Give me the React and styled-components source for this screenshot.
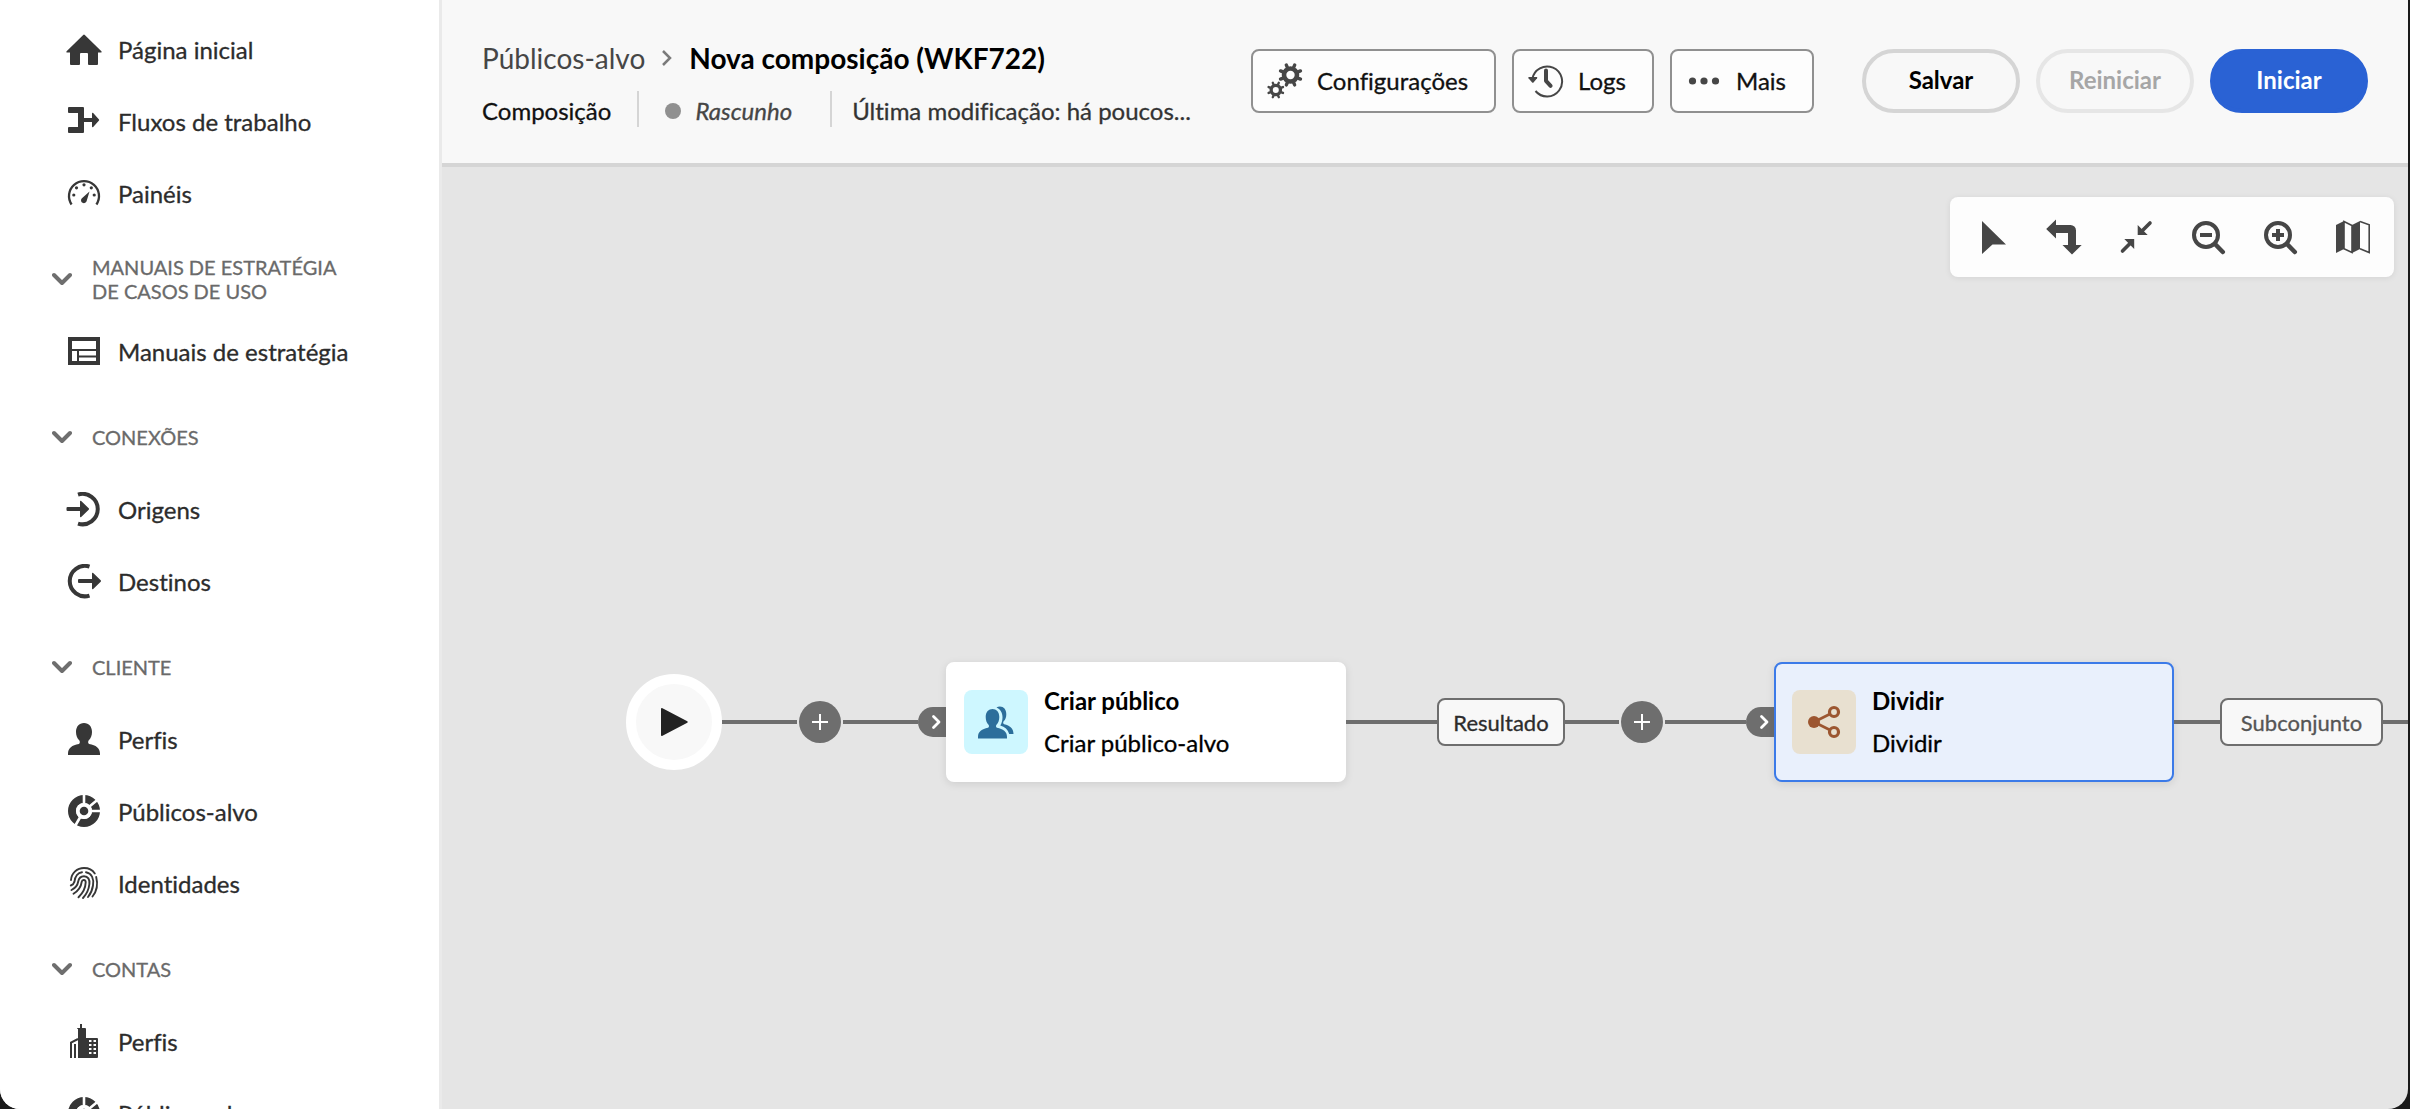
import React from "react";
import styled, { createGlobalStyle } from "styled-components";

const GlobalStyle = createGlobalStyle`
  * { box-sizing: border-box; }
  body {
    margin: 0;
    background: #1a1a1a;
    font-family: "Lato", "Noto Sans", sans-serif;
    font-size: 24px;
    line-height: 32px;
    font-variant-ligatures: none;
    color: #222;
  }
  button { font: inherit; font-variant-ligatures: inherit; color: inherit; cursor: pointer; }
  a { color: inherit; text-decoration: none; }
  svg { display: block; flex: none; }
`;

/* ---------- Shell ---------- */

const Window = styled.div`
  display: flex;
  height: 100vh;
  margin-right: 2px;
  overflow: hidden;
  border-radius: 0 0 20px 20px;
  background: #e5e5e5;
`;

const Sidebar = styled.nav`
  flex: none;
  width: 442px;
  padding-top: 14px;
  overflow: hidden;
  background: #fff;
  border-right: 3px solid #eaeaea;
`;

const Main = styled.main`
  flex: 1;
  min-width: 0;
  display: flex;
  flex-direction: column;
`;

/* ---------- Sidebar ---------- */

const NavList = styled.ul`
  margin: 0;
  padding: 0;
  list-style: none;
`;

const NavLink = styled.a`
  display: flex;
  align-items: center;
  gap: 16px;
  height: 72px;
  padding-left: 66px;
  color: #2c2c2c;
  -webkit-text-stroke: 0.3px currentColor;

  svg { color: #373737; }
`;

const SectionToggle = styled.button`
  display: flex;
  align-items: center;
  gap: 20px;
  width: 100%;
  height: 72px;
  margin-top: 14px;
  padding: 0 88px 3px 52px;
  border: 0;
  background: none;
  text-align: left;
  text-transform: uppercase;
  font-size: 20px;
  line-height: 24px;
  color: #6a6a6a;
  -webkit-text-stroke: 0.3px currentColor;
`;

/* ---------- Header ---------- */

const Header = styled.header`
  display: flex;
  justify-content: space-between;
  gap: 40px;
  height: 167px;
  padding: 0 40px;
  background: #f8f8f8;
  border-bottom: 4px solid #d5d5d5;
`;

const TitleBlock = styled.div`
  padding-top: 38px;
`;

const Breadcrumb = styled.div`
  display: flex;
  align-items: center;
  gap: 16px;
  height: 40px;
  font-size: 28px;
  color: #464646;
`;

const PageTitle = styled.h1`
  margin: 0;
  font-size: 28px;
  font-weight: 700;
  color: #000;
`;

const Meta = styled.div`
  display: flex;
  align-items: center;
  height: 36px;
  margin-top: 13px;
  white-space: nowrap;
`;

const MetaItem = styled.span`
  display: flex;
  align-items: center;
  gap: 14px;
  padding-top: 4px;
  color: ${(p) => p.$color || "#111"};
  font-style: ${(p) => (p.$italic ? "italic" : "normal")};
  -webkit-text-stroke: 0.3px currentColor;
`;

const MetaDivider = styled.span`
  width: 2px;
  height: 36px;
  margin: 0 ${(p) => p.$after}px 0 ${(p) => p.$before}px;
  background: #d5d5d5;
`;

const StatusDot = styled.span`
  width: 16px;
  height: 16px;
  border-radius: 50%;
  background: #909090;
`;

const Actions = styled.div`
  display: flex;
  gap: 16px;
  padding-top: 49px;
`;

const ToolButton = styled.button`
  display: flex;
  align-items: center;
  gap: 14px;
  height: 64px;
  padding: 0 26px 0 14px;
  border: 2px solid #909090;
  border-radius: 8px;
  background: #fdfdfd;
  color: #111;
  -webkit-text-stroke: 0.3px currentColor;

  svg { color: #464646; }
`;

const PillGroup = styled.div`
  display: flex;
  gap: 16px;
  margin-left: 32px;
`;

const Pill = styled.button`
  height: 64px;
  min-width: 158px;
  padding: 0 28px 2px;
  border: 4px solid ${(p) => (p.$tone === "primary" ? "#2a62d4" : p.disabled ? "#e6e6e6" : "#d5d5d5")};
  border-radius: 32px;
  background: ${(p) => (p.$tone === "primary" ? "#2a62d4" : "transparent")};
  color: ${(p) => (p.$tone === "primary" ? "#fff" : p.disabled ? "#a6a6a6" : "#000")};
  font-weight: 700;
`;

/* ---------- Canvas ---------- */

const Canvas = styled.section`
  flex: 1;
  display: flex;
  flex-direction: column;
  overflow: hidden;
`;

const CanvasTools = styled.div`
  display: flex;
  align-self: flex-end;
  align-items: center;
  height: 80px;
  margin: 30px 14px 0;
  padding: 0 6px;
  border-radius: 8px;
  background: #fdfdfd;
  box-shadow: 0 1px 6px rgba(0, 0, 0, 0.08);
`;

const CanvasTool = styled.button`
  display: grid;
  place-items: center;
  width: 72px;
  height: 72px;
  padding: 0;
  border: 0;
  background: none;
  color: #464646;
`;

const Flow = styled.div`
  display: flex;
  align-items: center;
  height: 120px;
  margin-top: 385px;
  padding-left: 184px;
`;

const Link = styled.span`
  flex: ${(p) => (p.$length ? "none" : "1 0 24px")};
  width: ${(p) => (p.$length ? p.$length + "px" : "auto")};
  height: 4px;
  background: #6e6e6e;
`;

const StartNode = styled.button`
  flex: none;
  display: grid;
  place-items: center;
  width: 96px;
  height: 96px;
  padding: 0;
  border: 10px solid #fff;
  border-radius: 50%;
  background: #f8f8f8;
`;

const AddButton = styled.button`
  flex: none;
  display: grid;
  place-items: center;
  width: 42px;
  height: 42px;
  margin: 0 2px;
  padding: 0;
  border: 0;
  border-radius: 50%;
  background: #6e6e6e;
`;

const Port = styled.span`
  flex: none;
  display: flex;
  align-items: center;
  justify-content: flex-end;
  width: 28px;
  height: 30px;
  padding-right: 5px;
  border-radius: 15px 0 0 15px;
  background: #6e6e6e;
`;

const Card = styled.article`
  flex: none;
  display: flex;
  align-items: center;
  gap: 16px;
  width: 400px;
  height: 120px;
  padding: 0 16px;
  border: 2px solid ${(p) => (p.$selected ? "#3b7ae8" : "#fff")};
  border-radius: 8px;
  background: ${(p) => (p.$selected ? "#e9f0fc" : "#fff")};
  box-shadow: 0 2px 8px rgba(0, 0, 0, 0.1);
  color: #000;
`;

const CardIcon = styled.span`
  display: grid;
  place-items: center;
  width: 64px;
  height: 64px;
  border-radius: 8px;
  background: ${(p) => p.$bg};
`;

const CardText = styled.div`
  display: grid;
  gap: 10px;
`;

const CardTitle = styled.h2`
  margin: 0;
  font-size: 24px;
  font-weight: 700;
`;

const CardSubtitle = styled.p`
  margin: 0;
  -webkit-text-stroke: 0.3px currentColor;
`;

const Outcome = styled.span`
  flex: none;
  display: grid;
  place-items: center;
  width: ${(p) => p.$width}px;
  height: 48px;
  padding-top: 2px;
  border: 2px solid #6e6e6e;
  border-radius: 8px;
  background: #f8f8f8;
  color: ${(p) => p.$color};
  font-size: 22px;
  -webkit-text-stroke: 0.3px currentColor;
`;

/* ---------- Icons ---------- */

const Icon = ({ size = 36, children }) => (
  <svg width={size} height={size} viewBox="0 0 36 36" fill="currentColor" aria-hidden="true">
    {children}
  </svg>
);

const line = { fill: "none", stroke: "currentColor" };

const HomeIcon = () => (
  <Icon>
    <path d="M17.2 2.9a1.2 1.2 0 0 1 1.6 0L35.4 19.2c.5.6.2 1.4-.6 1.4H32V32a1 1 0 0 1-1 1h-8a1 1 0 0 1-1-1V22a1 1 0 0 0-1-1h-6a1 1 0 0 0-1 1v10a1 1 0 0 1-1 1H5a1 1 0 0 1-1-1V20.600H1.200c-.8 0-1.100-.8-.6-1.400z" />
  </Icon>
);

const WorkflowIcon = () => (
  <Icon>
    <path d="M3 3h14a1 1 0 0 1 1 1v10h8v-4.600c0-.7.700-1 1.200-.5l5.600 6.300a1 1 0 0 1 0 1.500l-5.600 6.300c-.5.5-1.200.2-1.200-.5V18h-8v10a1 1 0 0 1-1 1H3a1 1 0 0 1-1-1v-4a1 1 0 0 1 1-1h9V9H3a1 1 0 0 1-1-1V4a1 1 0 0 1 1-1z" />
  </Icon>
);

const GaugeIcon = () => (
  <Icon>
    <path d="M5.600 28.500A15 15 0 1 1 30.400 28.500" {...line} strokeWidth="2.300" />
    <circle cx="7.800" cy="19" r="1.600" />
    <circle cx="10.500" cy="11.800" r="1.600" />
    <circle cx="18" cy="8.800" r="1.600" />
    <circle cx="25.300" cy="11.800" r="1.600" />
    <circle cx="28.200" cy="19" r="1.600" />
    <path d="M23.500 15.500 20.800 24.500a2.900 2.900 0 1 1-4.600-2.600z" />
  </Icon>
);

const PlaybookIcon = () => (
  <Icon>
    <rect x="4" y="5" width="28" height="24" {...line} strokeWidth="4" />
    <path d="M5 16h26M12 16v13M12 22.500h19" {...line} strokeWidth="2" />
  </Icon>
);

const SourcesIcon = () => (
  <Icon>
    <path d="M12 2.600A15.200 15.200 0 1 1 12 31.600" {...line} strokeWidth="4" />
    <path d="M1.500 15H14V9.600c0-.7.700-1 1.200-.5l7.500 7.200a1 1 0 0 1 0 1.400l-7.500 7.200c-.5.5-1.200.2-1.200-.5V19H1.500a1 1 0 0 1-1-1v-2a1 1 0 0 1 1-1z" />
  </Icon>
);

const DestinationsIcon = () => (
  <Icon>
    <path d="M23.500 2.600A15.200 15.200 0 1 0 23.500 31.600" {...line} strokeWidth="4" />
    <path d="M13 15h13V9.600c0-.7.700-1 1.200-.5l7.500 7.200a1 1 0 0 1 0 1.400l-7.500 7.200c-.5.5-1.200.2-1.200-.5V19H13a1 1 0 0 1-1-1v-2a1 1 0 0 1 1-1z" />
  </Icon>
);

const PersonIcon = () => (
  <Icon>
    <path d="M18 1c5 0 8 3.800 8 9 0 3.500-1.300 6.500-3.200 8.300-.8.800-1 3.200.3 3.600C30 23 34 26 34 31.500V33H2v-1.500C2 26 6 23 12.900 21.900c1.300-.4 1.100-2.800.3-3.600C11.300 16.500 10 13.500 10 10c0-5.200 3-9 8-9z" />
  </Icon>
);

const AudienceIcon = () => (
  <Icon>
    <circle cx="18" cy="17" r="12" {...line} strokeWidth="8" />
    <path d="M18 9V0M18 17 32.500 5M24 17h12M16 20 8.500 33" fill="none" stroke="#fff" strokeWidth="2.600" />
    <circle cx="18" cy="17" r="8" fill="#fff" />
    <circle cx="18" cy="17" r="4.300" />
  </Icon>
);

const FingerprintIcon = () => (
  <Icon>
    <g {...line} strokeWidth="1.900" strokeLinecap="round">
      <path d="M5 14C5.500 7 11 2 18 2c4.500 0 8.500 2 10.800 5.500" />
      <path d="M30.200 11c1.800 7 .8 14-3.700 19.500" />
      <path d="M8.500 15.500C9 10.500 12 6.800 16 6.200M20 6.200c6 1.200 8 6.800 7 13.300-.6 4.200-2.200 8-5 11.500" />
      <path d="M4.800 19.500c1.700-.6 3-1.600 3.500-3.500" />
      <path d="M5.500 24c3.500-1.700 6-4.200 6.700-8.500.6-3.400 2.600-5.300 5.800-5.300 4 0 5.900 3.200 5.400 7.800-.6 5.700-2.700 10-6.400 14" />
      <path d="M7.500 27.800c5-3.300 7.600-7 8.200-12 .4-2.500 4-2.500 4 .5-.2 6-3 11-7.200 15" />
    </g>
  </Icon>
);

const BuildingIcon = () => (
  <Icon>
    <path d="M14 0h2v4h3a1 1 0 0 1 1 1v9h11a1 1 0 0 1 1 1v18a1 1 0 0 1-1 1H12V5h-1a1 1 0 0 1 1-1h2z" />
    <path d="M5 34V18.500L12 15M9 34V20" {...line} strokeWidth="2" />
    <path d="M23 17h2.500M27.500 17H30M23 21h2.500M27.500 21H30M23 25h2.500M27.500 25H30M23 29h2.500M27.500 29H30" stroke="#fff" strokeWidth="2" />
  </Icon>
);

const ChevronDown = () => (
  <svg width="20" height="20" viewBox="0 0 20 20" aria-hidden="true">
    <path d="M2 6l8 8 8-8" fill="none" stroke="#6e6e6e" strokeWidth="4" strokeLinecap="round" strokeLinejoin="round" />
  </svg>
);

const ChevronRight = () => (
  <svg width="12" height="20" viewBox="0 0 12 20" aria-hidden="true">
    <path d="M2 3l7 7-7 7" fill="none" stroke="#7a7a7a" strokeWidth="2.500" />
  </svg>
);

const PortChevron = () => (
  <svg width="10" height="16" viewBox="0 0 10 16" aria-hidden="true">
    <path d="M2.500 2.500L8 8l-5.500 5.500" fill="none" stroke="#fff" strokeWidth="2.800" strokeLinecap="round" strokeLinejoin="round" />
  </svg>
);

const PlusGlyph = () => (
  <svg width="16" height="16" viewBox="0 0 16 16" aria-hidden="true">
    <path d="M8 0v16M0 8h16" stroke="#fff" strokeWidth="2" />
  </svg>
);

const PlayGlyph = () => (
  <svg width="30" height="30" viewBox="0 0 30 30" aria-hidden="true">
    <path d="M2 2v26a1 1 0 0 0 1.500.8L28.300 15.800a1 1 0 0 0 0-1.600L3.500 1.200A1 1 0 0 0 2 2z" fill="#222" />
  </svg>
);

const teeth = [22.5, 67.5, 112.5, 157.5, 202.5, 247.5, 292.5, 337.5];

const Gear = ({ cx, cy, r }) => (
  <g transform={`translate(${cx} ${cy})`}>
    <circle r={r * 0.54} {...line} strokeWidth={r * 0.38} />
    {teeth.map((angle) => (
      <path
        key={angle}
        d={`M0 ${-r * 0.62}V${-r * 0.9}`}
        transform={`rotate(${angle})`}
        {...line}
        strokeWidth={r * 0.28}
        strokeLinecap="round"
      />
    ))}
  </g>
);

const GearsIcon = () => (
  <Icon>
    <Gear cx={23.500} cy={12} r={12} />
    <Gear cx={8.800} cy={27} r={8.600} />
  </Icon>
);

const HistoryIcon = () => (
  <Icon>
    <path d="M4.300 16A15 15 0 1 1 7.500 28" {...line} strokeWidth="2" />
    <path d="M1 14h7.600c.6 0 .9.700.5 1.200l-3.600 4.300a1 1 0 0 1-1.400 0L.5 15.200C.1 14.700.4 14 1 14z" />
    <path d="M18 7.500v10.300l4.600 5" {...line} strokeWidth="4" strokeLinecap="round" strokeLinejoin="round" />
  </Icon>
);

const MoreIcon = () => (
  <Icon>
    <circle cx="6.500" cy="18" r="3.600" />
    <circle cx="18" cy="18" r="3.600" />
    <circle cx="29.500" cy="18" r="3.600" />
  </Icon>
);

const SelectIcon = () => (
  <Icon>
    <path d="M8 2v33L18.500 25.500H32z" />
  </Icon>
);

const TurnIcon = () => (
  <Icon>
    <path d="M10 .5V6h14.500a5.500 5.500 0 0 1 5.500 5.500V26h5.700L26 35.500 16.500 26H22V14H10v5.500L.2 10z" />
  </Icon>
);

const CollapseIcon = () => (
  <Icon>
    <path d="M19.700 6v10h10zM6.300 20h9.900v10z" />
    <path d="M32 4l-9 9M4.500 32l9-9" {...line} strokeWidth="3.600" strokeLinecap="round" />
  </Icon>
);

const ZoomOutIcon = () => (
  <Icon>
    <circle cx="16" cy="16" r="12" {...line} strokeWidth="4" />
    <path d="M25 25l7.800 8" {...line} strokeWidth="4.500" strokeLinecap="round" />
    <path d="M10 14h12v4H10z" />
  </Icon>
);

const ZoomInIcon = () => (
  <Icon>
    <circle cx="16" cy="16" r="12" {...line} strokeWidth="4" />
    <path d="M25 25l7.800 8" {...line} strokeWidth="4.500" strokeLinecap="round" />
    <path d="M10 14h4v-4h4v4h4v4h-4v4h-4v-4h-4z" />
  </Icon>
);

const MapIcon = () => (
  <Icon>
    <path d="M2 6l8-4v28l-8 4zM18 6l8-4v28l-8 4z" />
    <path d="M10 2.500L18 6.500V33.500L10 29.800zM26 2.500l9.200 3.200V33.500L26 29.800" {...line} strokeWidth="1.600" />
  </Icon>
);

const PeopleIcon = () => (
  <Icon>
    <g fill="#2c6e9b">
      <path d="M14.500 5c3.800 0 6.800 2.800 6.800 8 0 3.200-1 6-2.800 7.800-.8 1-.6 2.600.5 3 6 1.100 10 3.700 10 9.200v1.500H0V33c0-5.500 4-8.100 10-9.200 1.100-.4 1.300-2 .5-3C8.700 19 7.700 16.200 7.700 13c0-5.200 3-8 6.800-8z" />
      <path d="M18.500 3.500c1-.7 2.100-1 3.400-1 3.800 0 6.400 3 6.400 7.700 0 3-.9 5.400-2.600 7.100-.9 1-.6 2.500.5 2.900 5.700 1.300 9.300 4.200 9.300 9.800h-4.300c-1.200-4.400-4.400-7-8.900-8.400 1.400-2.300 2.200-5.100 2.200-8.300 0-4.600-2.300-8.400-6-9.800z" />
    </g>
  </Icon>
);

const SplitIcon = () => (
  <Icon>
    <g fill="none" stroke="#9c5630">
      <path d="M8 18l20-10M8 18l20 10" strokeWidth="2.600" />
      <circle cx="28" cy="8" r="4.500" strokeWidth="3.200" fill="#e8e0d0" />
      <circle cx="28" cy="28" r="4.500" strokeWidth="3.200" fill="#e8e0d0" />
    </g>
    <circle cx="8" cy="18" r="6" fill="#9c5630" />
  </Icon>
);

/* ---------- Data ---------- */

const navigation = [
  {
    items: [
      ["Página inicial", HomeIcon],
      ["Fluxos de trabalho", WorkflowIcon],
      ["Painéis", GaugeIcon],
    ],
  },
  { title: "Manuais de estratégia de casos de uso", items: [["Manuais de estratégia", PlaybookIcon]] },
  { title: "Conexões", items: [["Origens", SourcesIcon], ["Destinos", DestinationsIcon]] },
  {
    title: "Cliente",
    items: [
      ["Perfis", PersonIcon],
      ["Públicos-alvo", AudienceIcon],
      ["Identidades", FingerprintIcon],
    ],
  },
  { title: "Contas", items: [["Perfis", BuildingIcon], ["Públicos-alvo", AudienceIcon]] },
];

const canvasTools = [
  ["Selecionar", SelectIcon],
  ["Girar layout", TurnIcon],
  ["Ajustar à tela", CollapseIcon],
  ["Diminuir zoom", ZoomOutIcon],
  ["Aumentar zoom", ZoomInIcon],
  ["Mapa", MapIcon],
];

/* ---------- Parts ---------- */

const NavSection = ({ title, items }) => (
  <>
    {title && (
      <SectionToggle type="button" aria-expanded="true">
        <ChevronDown />
        <span>{title}</span>
      </SectionToggle>
    )}
    <NavList>
      {items.map(([label, Glyph]) => (
        <li key={label}>
          <NavLink href="#">
            <Glyph />
            <span>{label}</span>
          </NavLink>
        </li>
      ))}
    </NavList>
  </>
);

const ActivityCard = ({ title, subtitle, iconBg, selected, children }) => (
  <Card $selected={selected}>
    <CardIcon $bg={iconBg}>{children}</CardIcon>
    <CardText>
      <CardTitle>{title}</CardTitle>
      <CardSubtitle>{subtitle}</CardSubtitle>
    </CardText>
  </Card>
);

const AddStep = () => (
  <AddButton type="button" aria-label="Adicionar atividade">
    <PlusGlyph />
  </AddButton>
);

export default function App() {
  return (
    <>
      <GlobalStyle />
      <Window>
        <Sidebar>
          {navigation.map((section, index) => (
            <NavSection key={index} {...section} />
          ))}
        </Sidebar>
        <Main>
          <Header>
            <TitleBlock>
              <Breadcrumb>
                <a href="#">Públicos-alvo</a>
                <ChevronRight />
                <PageTitle>Nova composição (WKF722)</PageTitle>
              </Breadcrumb>
              <Meta>
                <MetaItem>Composição</MetaItem>
                <MetaDivider $before={26} $after={26} />
                <MetaItem $italic $color="#464646">
                  <StatusDot />
                  Rascunho
                </MetaItem>
                <MetaDivider $before={38} $after={20} />
                <MetaItem $color="#333">Última modificação: há poucos...</MetaItem>
              </Meta>
            </TitleBlock>
            <Actions>
              <ToolButton type="button">
                <GearsIcon />
                Configurações
              </ToolButton>
              <ToolButton type="button">
                <HistoryIcon />
                Logs
              </ToolButton>
              <ToolButton type="button">
                <MoreIcon />
                Mais
              </ToolButton>
              <PillGroup>
                <Pill type="button">Salvar</Pill>
                <Pill type="button" disabled>Reiniciar</Pill>
                <Pill type="button" $tone="primary">Iniciar</Pill>
              </PillGroup>
            </Actions>
          </Header>
          <Canvas>
            <CanvasTools>
              {canvasTools.map(([label, Glyph]) => (
                <CanvasTool key={label} type="button" aria-label={label}>
                  <Glyph />
                </CanvasTool>
              ))}
            </CanvasTools>
            <Flow>
              <StartNode type="button" aria-label="Início">
                <PlayGlyph />
              </StartNode>
              <Link $length={75} />
              <AddStep />
              <Link $length={75} />
              <Port><PortChevron /></Port>
              <ActivityCard title="Criar público" subtitle="Criar público-alvo" iconBg="#cef7ff">
                <PeopleIcon />
              </ActivityCard>
              <Link $length={91} />
              <Outcome $width={128} $color="#2c2c2c">Resultado</Outcome>
              <Link $length={54} />
              <AddStep />
              <Link $length={81} />
              <Port><PortChevron /></Port>
              <ActivityCard title="Dividir" subtitle="Dividir" iconBg="#e8e0d0" selected>
                <SplitIcon />
              </ActivityCard>
              <Link $length={46} />
              <Outcome $width={163} $color="#555">Subconjunto</Outcome>
              <Link />
            </Flow>
          </Canvas>
        </Main>
      </Window>
    </>
  );
}
